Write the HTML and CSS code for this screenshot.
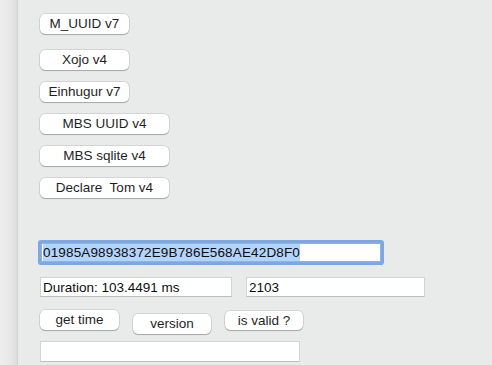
FILE: index.html
```html
<!DOCTYPE html>
<html>
<head>
<meta charset="utf-8">
<link rel="stylesheet" href="styles.css">
</head>
<body>
<div class="window">
  <div class="sidebar"></div>
  <div class="main">
    <div class="btn b1 w89">M_UUID v7</div>
    <div class="btn b2 w89">Xojo v4</div>
    <div class="btn b3 w89">Einhugur v7</div>
    <div class="btn b3 w129">MBS UUID v4</div>
    <div class="btn b3 w129">MBS sqlite v4</div>
    <div class="btn b3 w129">Declare&nbsp; Tom v4</div>
    <div class="field focus"><span class="sel">01985A98938372E9B786E568AE42D8F0</span></div>
    <div class="row r-dur">
      <div class="field f-dur">Duration: 103.4491 ms</div>
      <div class="field f-num">2103</div>
    </div>
    <div class="row r-btns">
      <div class="btn bt-get">get time</div>
      <div class="btn bt-ver">version</div>
      <div class="btn bt-valid">is valid ?</div>
    </div>
    <div class="field f-empty"></div>
  </div>
</div>
</body>
</html>
```
FILE: styles.css
```css
html, body {
  margin: 0;
  padding: 0;
  width: 492px;
  height: 365px;
  overflow: hidden;
  background: #ebebeb;
  font-family: "Liberation Sans", Arial, sans-serif;
  font-size: 13.5px;
  color: #222;
}
.window {
  display: flex;
  height: 365px;
}
.sidebar {
  width: 17px;
  flex: none;
  background: linear-gradient(to right, #efefef 0%, #e6e6e6 70%, #dcdcdc 100%);
  border-right: 1px solid #d2d2d2;
}
.main {
  flex: 1;
  display: flex;
  flex-direction: column;
  align-items: flex-start;
  padding-left: 22px;
  background: #e9eaea;
}
.btn {
  box-sizing: border-box;
  height: 20px;
  line-height: 20px;
  text-align: center;
  background: #fff;
  border-radius: 5px;
  box-shadow: 0 0 0 0.5px rgba(0,0,0,0.18), 0 1px 1px rgba(0,0,0,0.22);
  color: #1f1f1f;
  white-space: nowrap;
}
.w89 { width: 89px; }
.w129 { width: 129px; }
.b1 { margin-top: 14px; }
.b2 { margin-top: 16px; }
.b3 { margin-top: 12px; }
.field {
  box-sizing: border-box;
  height: 20px;
  line-height: 19px;
  background: #fff;
  border: 1px solid #d3d3d3;
  border-bottom-color: #bdbdbd;
  padding-left: 2px;
  color: #0d0d0d;
  white-space: nowrap;
}
.focus {
  margin-top: 45px;
  margin-left: 1px;
  width: 340px;
  height: 19px;
  line-height: 17px;
  border: 1px solid #8fb3e6;
  box-shadow: 0 0 0 3px #7ea8e4;
  border-radius: 1px;
  padding-left: 1px;
  letter-spacing: 0.15px;
}
.sel {
  background: #b3d4fc;
  display: inline-block;
  line-height: 17px;
}
.row {
  display: flex;
  align-items: flex-start;
}
.r-dur {
  margin-top: 15px;
  gap: 14px;
}
.f-dur { width: 192px; }
.f-num { width: 179px; }
.r-btns {
  margin-top: 13px;
}
.bt-get { width: 79px; }
.bt-ver { width: 78px; margin-left: 14px; margin-top: 4px; }
.bt-valid { width: 78px; margin-left: 14px; margin-top: 1px; height: 19px; line-height: 19px; }
.f-empty {
  margin-top: 7px;
  width: 260px;
  height: 21px;
}
```
